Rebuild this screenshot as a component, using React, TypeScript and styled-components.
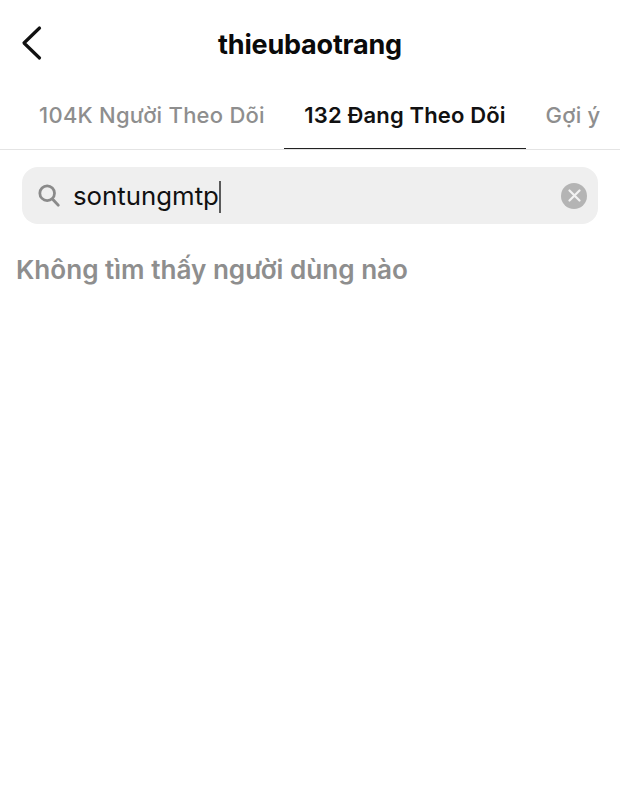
import { createGlobalStyle } from "styled-components";
import styled from "styled-components";

const Global = createGlobalStyle`
  html, body {
    margin: 0;
    padding: 0;
    background: #fff;
    font-family: Inter, "Noto Sans", "Liberation Sans", sans-serif;
  }
`;

const Page = styled.div`
  width: 620px;
  height: 807px;
  overflow: hidden;
  background: #fff;
`;

const Header = styled.header`
  height: 90px;
  display: flex;
  align-items: center;
  position: relative;
  justify-content: center;
  padding-bottom: 2px;
  box-sizing: border-box;
`;

const BackButton = styled.button`
  position: absolute;
  left: 21px;
  top: 25px;
  width: 22px;
  height: 36px;
  padding: 0;
  border: 0;
  background: none;
  display: block;
`;

const Title = styled.h1`
  margin: 0;
  font-size: 27px;
  font-weight: 700;
  color: #0a0a0a;
  letter-spacing: -0.2px;
`;

const Tabs = styled.nav`
  display: flex;
  height: 59px;
  padding-left: 20px;
  border-bottom: 1px solid #e4e4e4;
  box-sizing: content-box;
`;

const Tab = styled.div<{ $active?: boolean; $width: number }>`
  width: ${(p) => p.$width}px;
  flex: none;
  display: flex;
  justify-content: center;
  align-items: center;
  height: 59px;
  box-sizing: border-box;
  padding-bottom: 9px;
  font-size: 22px;
  white-space: nowrap;
  font-weight: ${(p) => (p.$active ? 600 : 500)};
  letter-spacing: ${(p) => (p.$active ? "0.15px" : "0.25px")};
  color: ${(p) => (p.$active ? "#111" : "#8e8e8e")};
  border-bottom: 1px solid ${(p) => (p.$active ? "#222" : "transparent")};
`;

const SearchBar = styled.div`
  margin: 17px 22px 0;
  height: 57px;
  border-radius: 16px;
  background: #efefef;
  display: flex;
  align-items: center;
  padding: 0 11px 0 16px;
  box-sizing: border-box;
`;

const Query = styled.span`
  margin-left: 13px;
  font-size: 25.8px;
  color: #111;
  line-height: 36px;
`;

const Caret = styled.span`
  display: inline-block;
  width: 2px;
  height: 32px;
  background: #5a5a5a;
  vertical-align: middle;
`;

const Clear = styled.div`
  margin-left: auto;
  width: 26px;
  height: 26px;
  border-radius: 50%;
  background: #b4b4b4;
  display: flex;
  align-items: center;
  justify-content: center;
`;

const Empty = styled.p`
  margin: 27px 0 0 16px;
  font-size: 26.1px;
  line-height: 38px;
  font-weight: 600;
  color: #8e8e8e;
`;

export default function App() {
  return (
    <Page>
      <Global />
      <Header>
        <BackButton>
          <svg width="22" height="36" viewBox="0 0 22 36" fill="none">
            <path d="M18.5 3 L3 18 L18.5 33" stroke="#111" strokeWidth="3.2" strokeLinecap="round" strokeLinejoin="round" />
          </svg>
        </BackButton>
        <Title>thieubaotrang</Title>
      </Header>
      <Tabs>
        <Tab $width={264}>104K Người Theo Dõi</Tab>
        <Tab $active $width={242}>132 Đang Theo Dõi</Tab>
        <Tab $width={94}>Gợi ý</Tab>
      </Tabs>
      <SearchBar>
        <svg width="22" height="23" viewBox="0 0 24 25" fill="none">
          <circle cx="10" cy="10" r="8" stroke="#8a8a8a" strokeWidth="3" />
          <path d="M16 16.5 L22 23" stroke="#8a8a8a" strokeWidth="3.2" strokeLinecap="round" />
        </svg>
        <Query>
          sontungmtp
          <Caret />
        </Query>
        <Clear>
          <svg width="13" height="13" viewBox="0 0 13 13" fill="none">
            <path d="M1.5 1.5 L11.5 11.5 M11.5 1.5 L1.5 11.5" stroke="#f2f2f2" strokeWidth="2.2" strokeLinecap="round" />
          </svg>
        </Clear>
      </SearchBar>
      <Empty>Không tìm thấy người dùng nào</Empty>
    </Page>
  );
}
